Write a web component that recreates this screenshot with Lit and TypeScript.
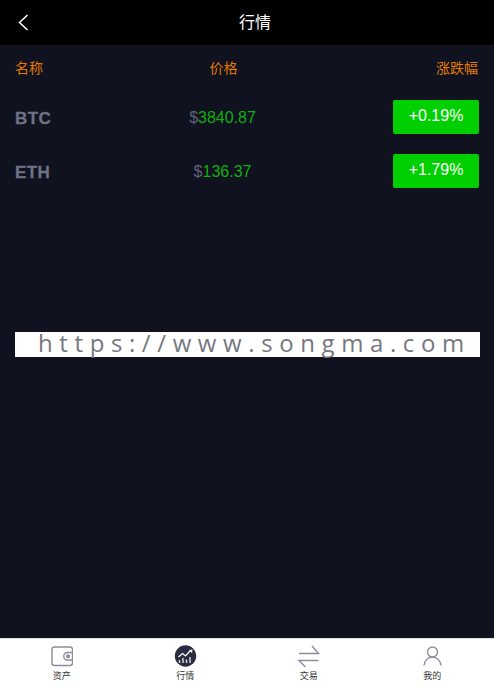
import { LitElement, html, css, svg } from 'lit';
import { customElement } from 'lit/decorators.js';

const coins = [
  { name: 'BTC', price: '3840.87', change: '+0.19%' },
  { name: 'ETH', price: '136.37', change: '+1.79%' },
];

const GREY = '#8d8d9c';

const tabs = [
  {
    label: '资产',
    icon: svg`<rect x="2" y="2" width="20.500" height="18.500" rx="2.500" fill="none" stroke="${GREY}" stroke-width="1.400"/>
      <path d="M22.500 7.500h-5a3.500 3.500 0 0 0 0 7.500h5" fill="none" stroke="${GREY}" stroke-width="1.400"/>
      <circle cx="18" cy="11.300" r="2" fill="${GREY}"/>`,
  },
  {
    label: '行情',
    icon: svg`<circle cx="11.500" cy="11" r="10.700" fill="#2b2c3f"/>
      <path d="M4.500 12l4-3.500 3 2.500 5-5.500" fill="none" stroke="#fff" stroke-width="1.200"/>
      <path d="M15 5l3.500-.5-.5 3.500z" fill="#fff"/>
      <path d="M5.500 18v-3M9 18v-5M12.500 18v-3.500M16 18v-6" stroke="#dcdce2" stroke-width="1.400"/>`,
  },
  {
    label: '交易',
    icon: svg`<path d="M2 8.500h19.500L15 1" fill="none" stroke="${GREY}" stroke-width="1.400"/>
      <path d="M21.500 15.500H2L8.500 22" fill="none" stroke="${GREY}" stroke-width="1.400"/>`,
  },
  {
    label: '我的',
    icon: svg`<circle cx="11.500" cy="7" r="5" fill="none" stroke="${GREY}" stroke-width="1.400"/>
      <path d="M3 20.500c.5-5 4-8.500 8.500-8.500s8 3.500 8.500 8.500" fill="none" stroke="${GREY}" stroke-width="1.400"/>`,
  },
];

@customElement('app-root')
export class AppRoot extends LitElement {
  static styles = css`
    :host {
      display: flex;
      flex-direction: column;
      height: 687px;
      font-family: 'Liberation Sans', 'Noto Sans CJK SC', sans-serif;
      background: #10121f;
    }
    .top {
      position: relative;
      height: 45px;
      flex: none;
      box-sizing: border-box;
      padding: 0 0 3px 16px;
      background: #000;
      color: #fff;
      display: flex;
      align-items: center;
      justify-content: center;
      font-size: 16px;
    }
    .back {
      position: absolute;
      left: 18px;
      top: 14px;
    }
    .main {
      position: relative;
      flex: 1;
      padding: 0 15px;
    }
    .row {
      display: grid;
      grid-template-columns: 100px 215px 1fr;
      align-items: center;
      height: 54px;
    }
    .head {
      height: 45px;
      padding-bottom: 1px;
      box-sizing: border-box;
      color: #e07a00;
      font-size: 14px;
    }
    .mid {
      text-align: center;
    }
    .head .mid {
      padding-left: 2px;
    }
    .end {
      text-align: right;
      padding-right: 1px;
    }
    .coin {
      padding-top: 3px;
      font-size: 17px;
      font-weight: 700;
      letter-spacing: 0.400px;
      color: #6e7285;
      -webkit-text-stroke: 0.300px #6e7285;
    }
    .price {
      padding-top: 2px;
      font-size: 16px;
      color: #0fae0f;
    }
    .price span {
      color: #5f6479;
    }
    .pct {
      justify-self: end;
      width: 86px;
      height: 34px;
      line-height: 32px;
      border-radius: 2px;
      background: #00d000;
      color: #fff;
      font-size: 16px;
      text-align: center;
    }
    .mark {
      position: absolute;
      left: 15px;
      right: 14px;
      top: 287px;
      height: 25px;
      background: #fff;
      color: #77777f;
      font-family: 'Open Sans', sans-serif;
      font-size: 24px;
      line-height: 22px;
      letter-spacing: 6.600px;
      padding-left: 23px;
      white-space: nowrap;
    }
    .tabs {
      flex: none;
      height: 49px;
      box-sizing: border-box;
      border-top: 1px solid #e4e4e8;
      background: #fff;
      display: grid;
      grid-template-columns: repeat(4, 1fr);
    }
    .tab {
      display: flex;
      flex-direction: column;
      align-items: center;
      padding-top: 6px;
      font-size: 9px;
      line-height: 14px;
      color: #333;
    }
    .tab svg {
      display: block;
      width: 23px;
      height: 23px;
      margin-bottom: 1px;
    }
  `;

  render() {
    return html`
      <header class="top">
        <svg class="back" width="11" height="17" viewBox="0 0 11 17">
          <path d="M9.500 1L1.500 8.500l8 7.500" fill="none" stroke="#fff" stroke-width="1.500"/>
        </svg>
        行情
      </header>
      <section class="main">
        <div class="row head">
          <div>名称</div>
          <div class="mid">价格</div>
          <div class="end">涨跌幅</div>
        </div>
        ${coins.map(
          (c) => html`
            <div class="row">
              <div class="coin">${c.name}</div>
              <div class="mid price"><span>$</span>${c.price}</div>
              <div class="pct">${c.change}</div>
            </div>
          `,
        )}
        <div class="mark">https://www.songma.com</div>
      </section>
      <nav class="tabs">
        ${tabs.map(
          (t) => html`
            <div class="tab">
              <svg viewBox="0 0 23 23">${t.icon}</svg>
              ${t.label}
            </div>
          `,
        )}
      </nav>
    `;
  }
}
